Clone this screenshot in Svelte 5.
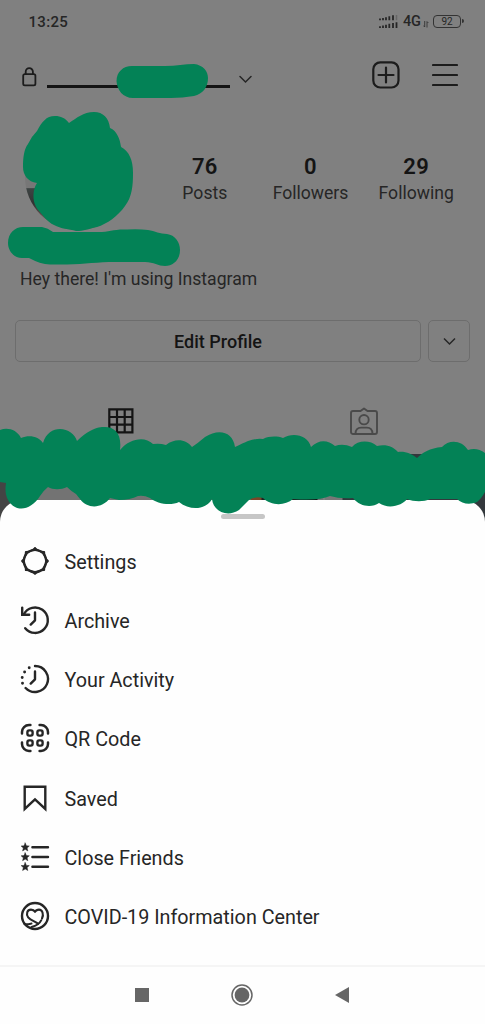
<script>
    const stats = [
        { value: "76", label: "Posts" },
        { value: "0", label: "Followers" },
        { value: "29", label: "Following" },
    ];

    const menu = [
        { icon: "settings", label: "Settings" },
        { icon: "archive", label: "Archive" },
        { icon: "activity", label: "Your Activity" },
        { icon: "qr", label: "QR Code" },
        { icon: "saved", label: "Saved" },
        { icon: "friends", label: "Close Friends" },
        { icon: "covid", label: "COVID-19 Information Center" },
    ];

    // wavy outer edge of the settings icon: eight points joined by scoops
    let gear = "";
    for (let i = 0; i <= 8; i++) {
        const a = (i * Math.PI) / 4 - Math.PI / 2;
        const b = a - Math.PI / 8;
        const x = 15 + 12.9 * Math.cos(a);
        const y = 15 + 12.9 * Math.sin(a);
        gear += i
            ? `Q${15 + 9.8 * Math.cos(b)} ${15 + 9.8 * Math.sin(b)} ${x} ${y}`
            : `M${x} ${y}`;
    }

    const star = "M0-4.2 1.2-1.4 4.1-1.2 1.9.8 2.6 3.7 0 2.1-2.6 3.7-1.9.8-4.1-1.2-1.2-1.4Z";
</script>

<div class="phone">
    <div class="profile">
        <div class="status">
            <span class="time">13:25</span>
            <div class="status-right">
                <svg width="20" height="16" viewBox="0 0 20 16">
                    <path d="M1 6.2V4.5M4 6.2V4M7 6.2V3.2M10.3 6.2V2.2M14 6.2V1.3" stroke="#262626" stroke-width="1.8" />
                    <path d="M17.5 6.2V1" stroke="#666" stroke-width="1.5" />
                    <path d="M1 14V12.2M4 14V11.5M7 14V10.8M10.3 14V9.8M14 14V9M17.5 14V8.2" stroke="#262626" stroke-width="1.8" />
                </svg>
                <span class="network">4G</span>
                <svg class="data" width="6" height="7" viewBox="0 0 6 7">
                    <path d="M1.7 0V6L.3 4.6M4 6.5V.6L5.4 2" fill="none" stroke="#333" stroke-width=".9" />
                </svg>
                <span class="battery">92</span>
            </div>
        </div>

        <header>
            <svg class="lock" width="15" height="20" viewBox="0 0 15 20">
                <rect x="1.2" y="7.2" width="12.2" height="11.2" rx="1.6" />
                <path d="M3.7 7V4.8a3.6 3.6 0 0 1 7.2 0V7" />
            </svg>
            <span class="username"></span>
            <svg class="chevron" width="13" height="9" viewBox="0 0 13 9">
                <path d="M1 1.5 6.5 7 12 1.5" />
            </svg>
            <svg class="add" width="28" height="28" viewBox="0 0 28 28">
                <rect x="1.3" y="1.3" width="25.2" height="25.2" rx="7" />
                <path d="M14 6.5V21.5M6.5 14H21.5" />
            </svg>
            <svg class="burger" width="26" height="24" viewBox="0 0 26 24">
                <path d="M1 2H25M1 12H25M1 22H25" />
            </svg>
        </header>

        <div class="summary">
            <div class="avatar"></div>
            <div class="stats">
                {#each stats as stat}
                    <div class="stat">
                        <b>{stat.value}</b>
                        <span>{stat.label}</span>
                    </div>
                {/each}
            </div>
        </div>

        <div class="bio">Hey there! I'm using Instagram</div>

        <div class="actions">
            <button class="edit">Edit Profile</button>
            <button class="more" aria-label="Suggestions">
                <svg class="chevron" width="13" height="9" viewBox="0 0 13 9">
                    <path d="M1 1.5 6.5 7 12 1.5" />
                </svg>
            </button>
        </div>

        <div class="tabs">
            <div class="tab">
                <svg width="26" height="26" viewBox="0 0 26 26">
                    <path d="M1.3 1.3H24.4V24.4H1.3ZM9 1.3V24.4M16.7 1.3V24.4M1.3 9H24.4M1.3 16.7H24.4" fill="none" stroke="#141414" stroke-width="2.2" />
                </svg>
            </div>
            <div class="tab">
                <svg width="28" height="28" viewBox="0 0 28 28">
                    <g fill="none" stroke="#4a4a4a" stroke-width="1.9" stroke-linejoin="round">
                        <path d="M3 4H10.5L14 1.4 17.5 4H25a2 2 0 0 1 2 2V25a2 2 0 0 1-2 2H3a2 2 0 0 1-2-2V6a2 2 0 0 1 2-2Z" />
                        <circle cx="14" cy="12.7" r="4.7" />
                        <path d="M5.5 26.5C5.7 22.5 8 20.6 11 20.6H17C20 20.6 22.3 22.5 22.5 26.5" />
                    </g>
                </svg>
            </div>
        </div>

        <div class="photos">
            <div class="photo first"></div>
            <div class="photo second"></div>
            <div class="photo third"></div>
        </div>
    </div>

    <div class="sheet">
        <div class="handle"></div>
        <nav class="menu">
            {#each menu as item}
                <div class="menu-item">
                    <svg class="icon" width="30" height="30" viewBox="0 0 30 30">
                        {#if item.icon === "settings"}
                            <path d={gear} stroke-width="2" />
                            <circle cx="15" cy="15" r="11.2" stroke-width="2.2" />
                        {:else if item.icon === "archive"}
                            <path d="M3.8 9.4A12.7 12.7 0 1 1 5.2 23.2" />
                            <path class="sharp" d="M2.2 2.6V9.7H9.2" />
                            <path d="M15 7.5V15.3L10.7 19.6" />
                        {:else if item.icon === "activity"}
                            <path d="M15 2A13 13 0 1 1 5.6 24" />
                            <path d="M15 7.5V15.3L10.7 19.6" />
                            <path d="M9.2 3.8h.01M4.6 8h.01M2.2 13.5h.01M2.5 19.2h.01" stroke-width="2.9" />
                        {:else if item.icon === "qr"}
                            <path d="M2 10.4V9A7 7 0 0 1 9 2H10.4M19.6 2H21A7 7 0 0 1 28 9V10.4M28 19.6V21A7 7 0 0 1 21 28H19.6M10.4 28H9A7 7 0 0 1 2 21V19.6" stroke-width="2.5" />
                            <rect x="7.4" y="7.4" width="5.2" height="5.2" rx="1.8" />
                            <rect x="17.4" y="7.4" width="5.2" height="5.2" rx="1.8" />
                            <rect x="7.4" y="17.4" width="5.2" height="5.2" rx="1.8" />
                            <rect x="17.4" y="17.4" width="5.2" height="5.2" rx="1.8" />
                        {:else if item.icon === "saved"}
                            <path class="sharp" d="M4.7 3.7H25.3V26L15 16.4 4.7 26Z" />
                        {:else if item.icon === "friends"}
                            <path d="M12.4 5.2H28M12.4 15H28M12.4 24.8H28" />
                            <g fill="#262626" stroke="#262626" stroke-width=".5">
                                <path d={star} transform="translate(5.2 5.2)" />
                                <path d={star} transform="translate(5.2 15)" />
                                <path d={star} transform="translate(5.2 24.8)" />
                            </g>
                        {:else}
                            <circle cx="15" cy="15" r="13" />
                            <path d="M4.5 23C7.500 24 9.500 22.800 11.500 22.600M11.500 26C16 25 19.400 23.300 21.300 19.200" stroke-width="2" />
                            <path d="M22 17.500C24 13.400 22.400 8.600 19 8.600C16.800 8.600 15.700 9.500 15 10.800C14.300 9.500 13.200 8.600 11 8.600C7.200 8.600 5.800 12.900 8.200 16.300C10.200 19 14.500 20.300 18 22.600" stroke-width="2.1" />
                        {/if}
                    </svg>
                    <span>{item.label}</span>
                </div>
            {/each}
        </nav>
        <div class="system-nav">
            <svg width="14" height="14" viewBox="0 0 14 14"><path d="M0 0H14V14H0Z" /></svg>
            <svg width="22" height="22" viewBox="0 0 22 22">
                <circle cx="11" cy="11" r="10" fill="none" stroke="#666" stroke-width="1.5" />
                <circle cx="11" cy="11" r="7.4" />
            </svg>
            <svg width="14" height="16" viewBox="0 0 14 16"><path d="M14 0V16L0 8Z" /></svg>
        </div>
    </div>

    <!-- marker strokes over the private parts -->
    <svg class="marker" width="485" height="520" viewBox="0 0 485 520">
        <path d="M116.500 81C116.500 72 123 66 132 66H165C176 66 185 64 194 64C203 65 208 71 208 78C208 87 203 94 194 96C186 97 179 98 171 98H133C123 98 117 90 116.500 81Z" />
        <path d="M23 167C23 158 24 149 28 144Q31 137 37 131C42 122 46 116 55 116C61 116 65 118 69 123C77 118 83 112 94 112C103 112 109 118 110 128C117 131 120 139 121 147C129 151 133 160 133 173C133 186 132 197 125 206C118 216 107 224 97 227C88 229 84 231 76 231C69 229 61 229 54 225C47 222 43 215 39 211C31 202 33 189 37 183C28 182 23 175 23 167Z" />
        <path d="M8 243C8 233 15 227 23 227H42Q48 228 53 232H98C110 232 113 229 127 229.500Q140 229 148 230C155 231 160 234 167 234C175 235 180 242 180 250C180 260 173 266 165 266C158 266 154 262 145 262H115C98 262 85 264 67 264.500H50Q40 264 29 258H22C14 258 8 251 8 243Z" />
        <path
            d="M0 430C8 427 17 430 21 438C30 434 39 437 43 443C46 433 53 429 60 429C68 429 75 434 77 441Q84 434 90 431C97 427 101 427 105 427C115 427 122 434 120 450Q125 444 130 442C138 438 147 438 153 444Q160 443 166 445C175 438 186 439 192 447Q198 443 205 437C219 428 233 432 235 447Q243 443 248 441Q257 438 263 439C269 436 277 436 283 438C293 432 308 435 311 447C319 439 328 440 335 446Q343 443 352 447C358 440 370 440 377 446C387 444 393 447 398 452C405 451 412 454 417 458C422 453 430 448 442 447C449 439 462 440 468 450Q477 447 485 453V492Q481 499 477 502C470 505 462 504 457 499H430C424 502 414 502 407 499C403 505 389 510 379 503C372 508 360 507 353 498Q340 499 330 496Q319 501 293 499C285 506 271 506 263 498Q255 496 249 500Q244 505 239 510C227 518 213 511 212 499C206 510 190 511 179 502C171 506 157 504 150 498Q144 495 138 496Q130 500 119 500L110 498C102 509 87 509 80 499L76 494Q71 491 67 487C61 490 53 490 48 487Q43 491 40 496C33 507 23 511 15 507C8 503 4 495 6 483L0 482Z"
        />
    </svg>
</div>

<style>
    :global(body) {
        margin: 0;
        background: #fff;
    }

    .phone {
        position: relative;
        width: 485px;
        height: 1024px;
        overflow: hidden;
        font-family: Roboto, sans-serif;
        color: #262626;
    }

    .profile {
        display: flex;
        flex-direction: column;
        height: 522px;
        background: #808080;
    }

    .status {
        display: flex;
        justify-content: space-between;
        align-items: center;
        height: 43px;
        padding: 0 24px 0 28.5px;
    }

    .time {
        font-size: 15px;
        font-weight: 500;
        letter-spacing: 0.3px;
    }

    .status-right {
        display: flex;
        align-items: center;
    }

    .network {
        margin-left: 4px;
        font-size: 14.5px;
        font-weight: 500;
    }

    .data {
        margin: 5px 4px 0 2px;
    }

    .battery {
        position: relative;
        box-sizing: border-box;
        width: 28px;
        height: 13px;
        border: 1.5px solid #333;
        border-radius: 4px;
        font-size: 10px;
        line-height: 11px;
        text-align: center;
    }

    .battery:after {
        position: absolute;
        content: "";
        right: -4px;
        top: 3px;
        width: 2px;
        height: 4px;
        border-radius: 0 2px 2px 0;
        background: #333;
    }

    header {
        display: flex;
        align-items: center;
        height: 64px;
        padding: 0 27px 0 22px;
    }

    header svg {
        fill: none;
        stroke: #1c1c1c;
        stroke-linecap: round;
    }

    .lock {
        margin-top: 3px;
        stroke-width: 1.8;
    }

    .username {
        width: 183px;
        height: 3px;
        margin: 23px 9px 0 9.5px;
        background: #141414;
    }

    .chevron {
        fill: none;
        stroke: #262626;
        stroke-width: 1.5;
    }

    header .chevron {
        margin-top: 8px;
    }

    .add {
        margin-left: auto;
        stroke-width: 2.2;
    }

    .burger {
        margin-left: 32px;
        stroke-width: 2.2;
    }

    .summary {
        display: flex;
        height: 160px;
    }

    .avatar {
        width: 106px;
        height: 106px;
        margin: 17px 0 0 25px;
        border-radius: 50%;
        background: linear-gradient(#777 60%, #3d4443 61%, #333 75%, #80605c 95%);
    }

    .stats {
        display: flex;
        flex: 1;
        padding: 45px 16px 0 21px;
    }

    .stat {
        display: flex;
        flex: 1;
        flex-direction: column;
        align-items: center;
        font-size: 17.6px;
        line-height: 25px;
    }

    .stat b {
        font-size: 22px;
        line-height: 29px;
        font-weight: 600;
        letter-spacing: 0.3px;
        color: #141414;
    }

    .bio {
        height: 53px;
        padding-left: 20px;
        font-size: 17.6px;
        line-height: 24px;
    }

    .actions {
        display: flex;
        gap: 7px;
        height: 42px;
        padding: 0 15px;
    }

    button {
        box-sizing: border-box;
        padding: 0;
        border: 1.5px solid #6d6d6d;
        border-radius: 5px;
        background: none;
        font: 500 18px Roboto, sans-serif;
        color: #141414;
    }

    .edit {
        flex: 1;
    }

    .more {
        display: flex;
        align-items: center;
        justify-content: center;
        width: 42px;
    }

    .tabs {
        display: flex;
        height: 92px;
    }

    .tab {
        display: flex;
        flex: 1;
        justify-content: center;
        align-items: center;
        padding-top: 26px;
    }

    .photos {
        display: flex;
        flex: 1;
        gap: 2px;
    }

    .photo {
        flex: 1;
    }

    .first {
        background: linear-gradient(90deg, #444 22px, #737373 23px);
    }

    .second {
        background: linear-gradient(90deg, #6f6f6f 88px, #7a4628 89px 99px, #222 100px 126px, #151515 155px, #777 156px);
    }

    .third {
        background: linear-gradient(90deg, #777 17px, #33383c 18px);
    }

    .sheet {
        position: relative;
        display: flex;
        flex-direction: column;
        height: 525px;
        margin-top: -22.5px;
        border-radius: 22px 22px 0 0;
        background: #fefefe;
    }

    .handle {
        width: 44px;
        height: 5px;
        margin: 14.5px auto 0;
        border-radius: 3px;
        background: #c6c6c6;
    }

    .menu {
        height: 446px;
        padding-top: 12px;
        box-sizing: border-box;
    }

    .menu-item {
        display: flex;
        align-items: center;
        gap: 15px;
        height: 59.25px;
        padding-left: 19.5px;
        font-size: 19.75px;
    }

    .menu-item span {
        padding-top: 3px;
    }

    .icon {
        fill: none;
        stroke: #262626;
        stroke-width: 2.4;
        stroke-linecap: round;
        stroke-linejoin: round;
    }

    .sharp {
        stroke-linejoin: miter;
    }

    .system-nav {
        display: flex;
        flex: none;
        height: 56px;
        justify-content: space-between;
        align-items: center;
        padding: 0 136px 0 135px;
        border-top: 2px solid #f5f5f5;
        fill: #666;
    }

    .marker {
        position: absolute;
        top: 0;
        left: 0;
        fill: #038256;
        pointer-events: none;
    }
</style>
